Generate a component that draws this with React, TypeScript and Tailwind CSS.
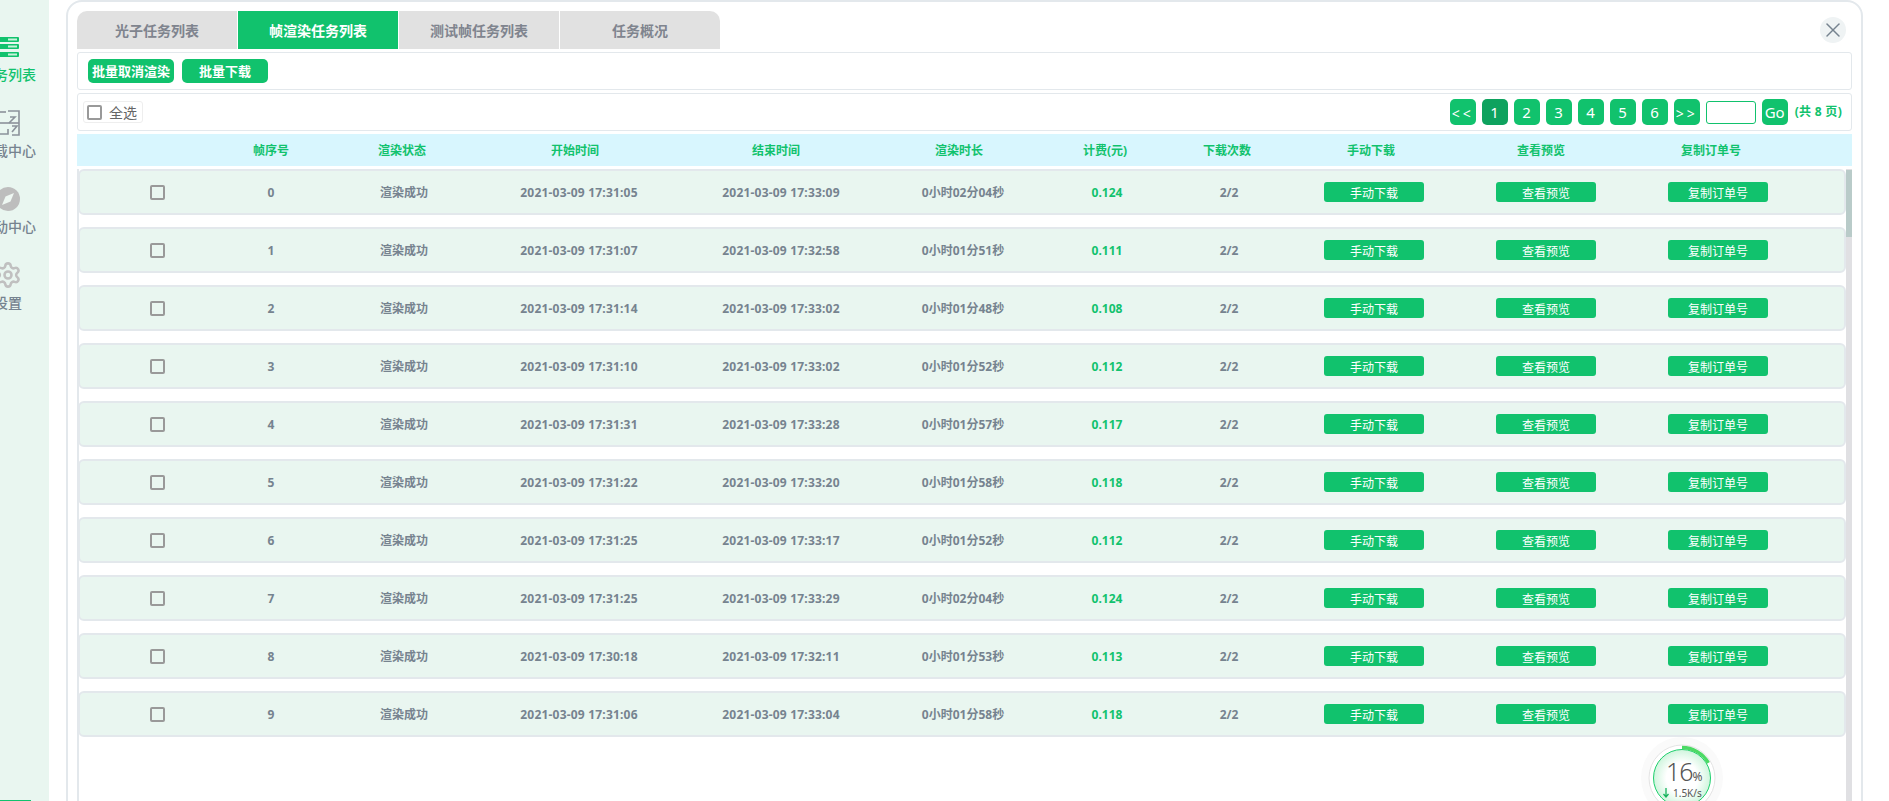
import { Settings, X } from "lucide-react";

const rows = [
  { start: "2021-03-09 17:31:05", end: "2021-03-09 17:33:09", time: "0小时02分04秒", fee: "0.124" },
  { start: "2021-03-09 17:31:07", end: "2021-03-09 17:32:58", time: "0小时01分51秒", fee: "0.111" },
  { start: "2021-03-09 17:31:14", end: "2021-03-09 17:33:02", time: "0小时01分48秒", fee: "0.108" },
  { start: "2021-03-09 17:31:10", end: "2021-03-09 17:33:02", time: "0小时01分52秒", fee: "0.112" },
  { start: "2021-03-09 17:31:31", end: "2021-03-09 17:33:28", time: "0小时01分57秒", fee: "0.117" },
  { start: "2021-03-09 17:31:22", end: "2021-03-09 17:33:20", time: "0小时01分58秒", fee: "0.118" },
  { start: "2021-03-09 17:31:25", end: "2021-03-09 17:33:17", time: "0小时01分52秒", fee: "0.112" },
  { start: "2021-03-09 17:31:25", end: "2021-03-09 17:33:29", time: "0小时02分04秒", fee: "0.124" },
  { start: "2021-03-09 17:30:18", end: "2021-03-09 17:32:11", time: "0小时01分53秒", fee: "0.113" },
  { start: "2021-03-09 17:31:06", end: "2021-03-09 17:33:04", time: "0小时01分58秒", fee: "0.118" },
];

const tabs = ["光子任务列表", "帧渲染任务列表", "测试帧任务列表", "任务概况"];
const heads = ["帧序号", "渲染状态", "开始时间", "结束时间", "渲染时长", "计费(元)", "下载次数", "手动下载", "查看预览", "复制订单号"];
const pages = ["<<", "1", "2", "3", "4", "5", "6", ">>"];

function ListIcon() {
  return (
    <svg width="22" height="20" viewBox="0 0 22 20">
      <rect x="0" y="0" width="22" height="5" rx="1" fill="#11c26d" />
      <rect x="0" y="7" width="22" height="5" rx="1" fill="#11c26d" />
      <rect x="0" y="15" width="22" height="5" rx="1" fill="#11c26d" />
      <rect x="11" y="1.5" width="9" height="2" fill="#c9f2dc" />
      <rect x="11" y="8.5" width="9" height="2" fill="#c9f2dc" />
      <rect x="11" y="16.5" width="9" height="2" fill="#c9f2dc" />
    </svg>
  );
}

function DownloadIcon() {
  return (
    <svg width="26" height="26" viewBox="0 0 26 26" fill="none" stroke="#8b929a" strokeWidth="1.6">
      <path d="M0 2H11" />
      <path d="M13 1H24V25H17" />
      <path d="M0 13H24" />
      <path d="M15 7H20L14 13" />
      <path d="M17 16H22L17 22" />
      <path d="M0 24H13V19" />
    </svg>
  );
}

function CompassIcon() {
  return (
    <svg width="24" height="24" viewBox="0 0 24 24">
      <circle cx="12" cy="12" r="12" fill="#bdbdbd" />
      <path d="M18 6l-3.5 8.5L6 18l3.5-8.5z" fill="#eef7f2" />
    </svg>
  );
}

function NavItem({ label, active, children }: { label: string; active?: boolean; children: React.ReactNode }) {
  return (
    <div className="flex h-[76px] w-[96px] shrink-0 flex-col items-center -ml-[40px]">
      <div className="flex h-[26px] items-center justify-center">{children}</div>
      <div className={`mt-[5px] h-5 text-[14px] leading-5 font-medium whitespace-nowrap ${active ? "text-[#11c26d]" : "text-[#76838f]"}`}>
        {label}
      </div>
    </div>
  );
}

function SpeedBall() {
  return (
    <div className="absolute left-[1641px] top-[737px] h-[82px] w-[82px] rounded-full bg-[#fafafa]">
      <svg className="absolute inset-0" width="82" height="82" viewBox="0 0 82 82" fill="none">
        <circle cx="41" cy="41" r="33" fill="#fff" stroke="#e4e4e4" />
        <defs>
          <radialGradient id="ball">
            <stop offset="55%" stopColor="#ffffff" />
            <stop offset="100%" stopColor="#cff5dd" />
          </radialGradient>
        </defs>
        <circle cx="41" cy="41" r="28.5" fill="url(#ball)" stroke="#1fcf6d" />
        <path d="M41 10.5A30.5 30.5 0 0 1 67.4 25.8" stroke="#4cd964" strokeWidth="3.4" />
      </svg>
      <div className="absolute left-[25px] top-[20px] flex items-baseline text-[#555]">
        <span className="text-[25px] leading-[28px] font-light tracking-[-1px]">16</span>
        <span className="text-[12px] leading-[14px]">%</span>
      </div>
      <div className="absolute left-[22px] top-[49px] flex items-center gap-[4px] text-[10px] leading-[14px] text-[#555]">
        <svg width="6" height="10" viewBox="0 0 6 10" fill="none" stroke="#16b35c" strokeWidth="1.3">
          <path d="M3 0v9M.5 6L3 9l2.5-3" />
        </svg>
        <span>1.5K/s</span>
      </div>
    </div>
  );
}

export default function App() {
  return (
    <div className="relative flex h-[801px] w-[1889px] overflow-hidden bg-white font-['Noto_Sans','Noto_Sans_CJK_SC',sans-serif]">
      <aside className="flex h-full w-[49px] shrink-0 flex-col overflow-hidden bg-[#e9f6f0] pt-[34px]">
        <NavItem label="任务列表" active>
          <ListIcon />
        </NavItem>
        <NavItem label="下载中心">
          <DownloadIcon />
        </NavItem>
        <NavItem label="活动中心">
          <CompassIcon />
        </NavItem>
        <NavItem label="设置">
          <Settings size={28} color="#c0c0c0" strokeWidth={2.2} />
        </NavItem>
        <div className="mt-auto h-px w-[31px] shrink-0 bg-[#11c26d]" />
      </aside>

      <main className="ml-[17px] h-[830px] w-[1797px] shrink-0 rounded-[16px] border-2 border-[#e3e8ec] px-[9px] pt-[9px]">
        <div className="flex items-center justify-between pr-[6px]">
          <div className="flex gap-px">
            {tabs.map((t, i) => (
              <div
                key={t}
                className={`flex h-[38px] w-[160px] items-center justify-center text-[14px] font-semibold ${
                  i === 1 ? "bg-[#11c26d] text-white" : "bg-[#e1e1e1] text-[#7f848e]"
                } ${i === 0 ? "rounded-tl-[10px]" : ""} ${i === 3 ? "rounded-tr-[10px]" : ""}`}
              >
                {t}
              </div>
            ))}
          </div>
          <div className="flex h-[26px] w-[26px] items-center justify-center rounded-full bg-[#eff3f4]">
            <X size={24} color="#76838f" strokeWidth={1.5} />
          </div>
        </div>

        <div className="mt-[3px] flex h-[38px] items-center gap-2 rounded-[3px] border border-[#e3e8ec] pl-[10px]">
          <button className="h-6 w-[86px] rounded-[5px] bg-[#11c26d] pt-px text-[13px] font-semibold text-white">批量取消渲染</button>
          <button className="h-6 w-[86px] rounded-[5px] bg-[#11c26d] pt-px text-[13px] font-semibold text-white">批量下载</button>
        </div>

        <div className="mt-[3px] flex h-[38px] items-center justify-between rounded-[3px] border border-[#e3e8ec] pl-[5px] pr-[9px]">
          <div className="flex h-[22px] w-[60px] items-center rounded-[3px] border border-[#eeeeee] pl-[3px]">
            <span className="h-[15px] w-[15px] rounded-[2px] border-2 border-[#999999]" />
            <span className="ml-[7px] pt-[2px] text-[14px] leading-none text-[#666666]">全选</span>
          </div>
          <div className="flex items-center gap-[6px]">
            {pages.map((p) => (
              <div
                key={p}
                className={`flex h-[26px] w-[26px] items-center justify-center rounded-[5px] text-white ${
                  p === "1" ? "bg-[#0ea25e]" : "bg-[#11c26d]"
                } ${p.length > 1 ? "pt-[2px] text-[14px] tracking-[3px]" : "text-[15px]"}`}
              >
                {p}
              </div>
            ))}
            <input className="h-[23px] w-[50px] rounded-[3px] border border-[#11c26d] bg-white" />
            <div className="flex h-[26px] w-[26px] items-center justify-center rounded-[5px] bg-[#11c26d] text-[15px] text-white">Go</div>
            <span className="ml-px text-[12px] font-bold tracking-[0.3px] whitespace-nowrap text-[#11c26d]">(共 8 页)</span>
          </div>
        </div>

        <div className="mt-[3px] grid h-8 grid-cols-[144px_100px_162px_184px_218px_148px_144px_100px_188px_152px_188px] items-center bg-[#d8f6fe] pt-[2px] text-center text-[12px] font-bold text-[#11c26d]">
          <div />
          {heads.map((h) => (
            <div key={h}>{h}</div>
          ))}
        </div>

        <div className="mt-[3px] flex h-[640px]">
          <div className="flex-1 border-l-2 border-[#e3e8ec]">
            {rows.map((r, i) => (
              <div
                key={i}
                className="-ml-px mb-3 grid h-[46px] grid-cols-[141px_100px_166px_184px_220px_144px_144px_100px_190px_154px_190px] items-center rounded-[6px] border-2 border-[#e3e8ec] bg-[#e9f6f0] text-center text-[12px] font-bold text-[#76838f]"
              >
                <div className="pl-[70px]">
                  <span className="block h-[15px] w-[15px] rounded-[2px] border-2 border-[#999999]" />
                </div>
                <div className="pt-[2px]">{i}</div>
                <div className="pt-[2px] font-semibold">渲染成功</div>
                <div className="pt-[2px] tracking-[0.2px]">{r.start}</div>
                <div className="pt-[2px] tracking-[0.2px]">{r.end}</div>
                <div className="pt-[2px]">{r.time}</div>
                <div className="pt-[2px] text-[#11c26d]">{r.fee}</div>
                <div className="pt-[2px]">2/2</div>
                {["手动下载", "查看预览", "复制订单号"].map((b) => (
                  <div key={b} className="flex justify-center">
                    <button className="h-5 w-[100px] rounded-[3px] bg-[#11c26d] pt-[2px] text-[12px] leading-5 font-normal text-white">{b}</button>
                  </div>
                ))}
              </div>
            ))}
          </div>
          <div className="w-[6px] shrink-0 bg-[#e0e0e3] pt-px">
            <div className="h-[67px] bg-[#b9cbc9]" />
          </div>
        </div>
      </main>

      <SpeedBall />
    </div>
  );
}
